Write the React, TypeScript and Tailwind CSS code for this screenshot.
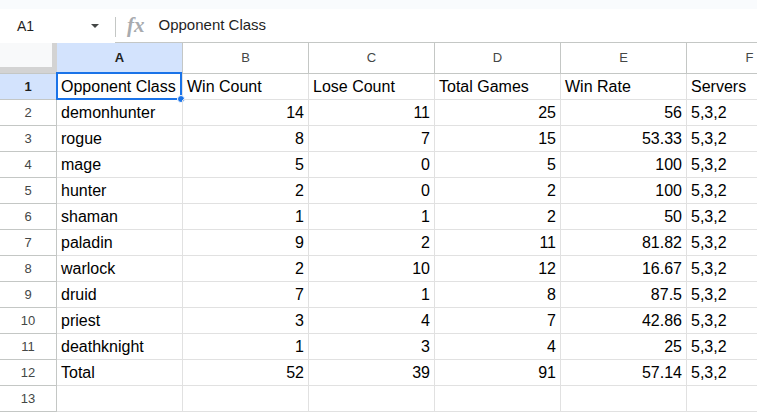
import React from 'react';

type Cell = string | number | null;

const rows: Cell[][] = [
  ['Opponent Class', 'Win Count', 'Lose Count', 'Total Games', 'Win Rate', 'Servers'],
  ['demonhunter', 14, 11, 25, 56, '5,3,2'],
  ['rogue', 8, 7, 15, 53.33, '5,3,2'],
  ['mage', 5, 0, 5, 100, '5,3,2'],
  ['hunter', 2, 0, 2, 100, '5,3,2'],
  ['shaman', 1, 1, 2, 50, '5,3,2'],
  ['paladin', 9, 2, 11, 81.82, '5,3,2'],
  ['warlock', 2, 10, 12, 16.67, '5,3,2'],
  ['druid', 7, 1, 8, 87.5, '5,3,2'],
  ['priest', 3, 4, 7, 42.86, '5,3,2'],
  ['deathknight', 1, 3, 4, 25, '5,3,2'],
  ['Total', 52, 39, 91, 57.14, '5,3,2'],
  [null, null, null, null, null, null],
];

const columns = ['A', 'B', 'C', 'D', 'E', 'F'];

const FormulaBar: React.FC = () => (
  <div className="flex h-[34px] items-stretch bg-white">
    <div className="flex w-[115px] items-center pl-[17px] pr-[16px]">
      <span className="text-[14px] text-[#1f1f1f]">A1</span>
      <span className="ml-auto h-0 w-0 border-x-[4px] border-t-[4px] border-x-transparent border-t-[#444746]" />
    </div>
    <div className="relative flex flex-1 items-center border-b border-[#c4c7c5]">
      <span className="absolute left-0 top-[8px] h-[20px] w-px bg-[#c4c7c5]" />
      <span
        className="ml-[12px] text-[21px] font-bold italic leading-none text-[#a8abaf]"
        style={{ fontFamily: '"Liberation Serif", serif' }}
      >
        fx
      </span>
      <span className="ml-[14px] text-[15px] text-[#1f1f1f]">Opponent Class</span>
    </div>
  </div>
);

const HeaderRow: React.FC = () => (
  <div className="flex h-[31px] border-b border-[#c4c7c5]">
    <div className="w-[57px] shrink-0 border-b-[6px] border-r-[5px] border-[#d3d3d3] bg-[#f8f9fa]" />
    {columns.map((c, i) => (
      <div
        key={c}
        className={
          i === 0
            ? 'flex w-[126px] shrink-0 items-center justify-center border-r border-[#c4c7c5] bg-[#d3e3fd] text-[13px] font-bold text-[#1f1f1f]'
            : 'flex w-[126px] shrink-0 items-center justify-center border-r border-[#c4c7c5] text-[13px] text-[#444746]'
        }
      >
        {c}
      </div>
    ))}
  </div>
);

const DataRow: React.FC<{ index: number; cells: Cell[] }> = ({ index, cells }) => (
  <div className="flex h-[26px]">
    <div
      className={
        index === 1
          ? 'flex w-[57px] shrink-0 items-center justify-center border-b border-r border-[#c4c7c5] bg-[#d3e3fd] text-[13px] font-bold text-[#1f1f1f]'
          : 'flex w-[57px] shrink-0 items-center justify-center border-b border-r border-[#c4c7c5] text-[13px] text-[#444746]'
      }
    >
      {index}
    </div>
    {cells.map((v, i) => (
      <div
        key={i}
        className={
          typeof v === 'number'
            ? 'flex w-[126px] shrink-0 items-center justify-end overflow-hidden whitespace-nowrap border-b border-r border-[#e1e1e1] pr-[4px] pt-px text-[16px] text-black'
            : 'relative flex w-[126px] shrink-0 items-center overflow-visible whitespace-nowrap border-b border-r border-[#e1e1e1] pl-[4px] pt-px text-[16px] text-black'
        }
      >
        {v}
        {index === 1 && i === 0 && (
          <div className="absolute -left-[1px] -top-[2px] -bottom-[1px] right-0 border-2 border-[#1a73e8]">
            <span className="absolute -bottom-[5px] -right-[5px] h-[8px] w-[8px] rounded-full border border-white bg-[#1a73e8]" />
          </div>
        )}
      </div>
    ))}
  </div>
);

export default function App() {
  return (
    <div
      className="h-[413px] w-[757px] overflow-hidden bg-white"
      style={{ fontFamily: '"Liberation Sans", Arial, sans-serif' }}
    >
      <div className="h-[9px] bg-[#f9fbfd]" />
      <FormulaBar />
      <HeaderRow />
      {rows.map((r, i) => (
        <DataRow key={i} index={i + 1} cells={r} />
      ))}
    </div>
  );
}
